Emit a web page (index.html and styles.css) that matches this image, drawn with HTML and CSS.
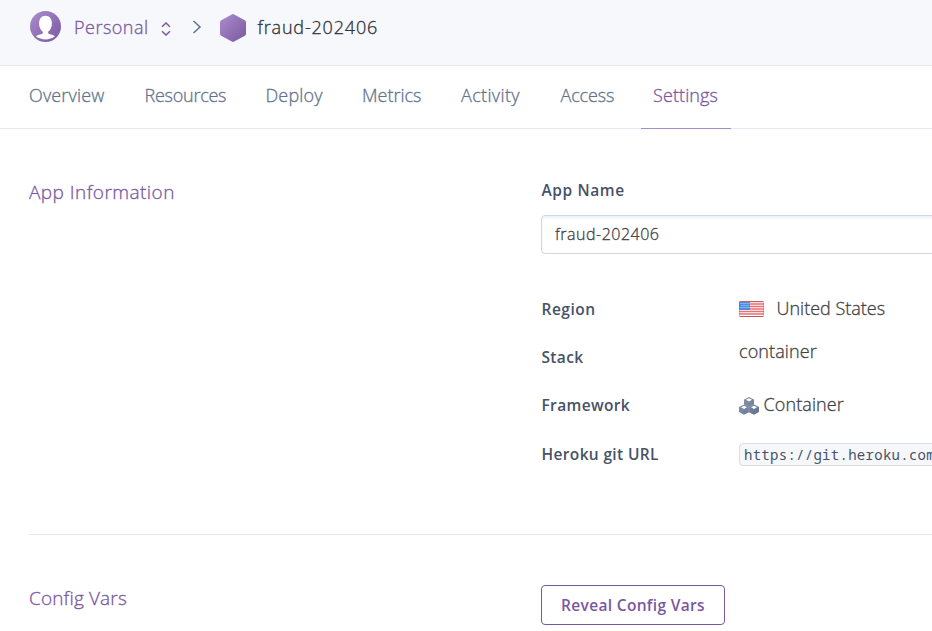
FILE: index.html
```html
<!DOCTYPE html>
<html lang="en">
<head>
<meta charset="utf-8">
<title>fraud-202406 · Settings | Heroku</title>
<link rel="stylesheet" href="styles.css">
</head>
<body>
<header class="breadcrumb">
  <svg class="avatar" viewBox="0 0 30 30">
    <defs><linearGradient id="purple" x1="0" y1="0" x2="1" y2="1"><stop offset="0" stop-color="#ac8dcd"/><stop offset="1" stop-color="#79589f"/></linearGradient></defs>
    <circle cx="15" cy="15" r="15" fill="url(#purple)"/>
    <path d="M15 4.500c-4 0-6.200 3-6.200 7.600 0 3.400 1.300 6.400 3.600 8.100v1.200c0 .8-.8 1-2.400 1.300-2 .4-3.400.9-4.200 1.800 2.500 2.100 5.800 3 9.200 3s6.700-.9 9.200-3c-.8-.9-2.200-1.400-4.200-1.800-1.600-.3-2.400-.5-2.400-1.300v-1.200c2.300-1.700 3.600-4.700 3.600-8.100 0-4.600-2.200-7.600-6.200-7.600z" fill="#fff"/>
  </svg>
  <span class="owner">Personal</span>
  <svg class="updown" viewBox="0 0 10 14"><path d="M1 4.700 5 1l4 3.700M1 9.300 5 13l4-3.700" /></svg>
  <svg class="chevron" viewBox="0 0 10 14"><path d="M1.500 1 8 7l-6.500 6"/></svg>
  <svg class="hexagon" viewBox="0 0 26 28"><path d="M11.800.4q1.200-.6 2.400 0l10.600 5.800q1.200.7 1.200 2v11.600q0 1.300-1.200 2l-10.600 5.800q-1.200.6-2.400 0L1.200 21.800q-1.200-.7-1.200-2V8.200q0-1.300 1.200-2z" fill="url(#purple)"/></svg>
  <span class="app">fraud-202406</span>
</header>
<nav class="tabs">
  <a class="tab overview">Overview</a><a class="tab resources">Resources</a><a class="tab deploy">Deploy</a><a class="tab metrics">Metrics</a><a class="tab activity">Activity</a><a class="tab access">Access</a><a class="tab settings active">Settings</a>
</nav>
<main>
  <section class="section info">
    <h2 class="title-info">App Information</h2>
    <div class="details">
      <label class="label label-name" for="name">App Name</label>
      <input class="name" id="name" value="fraud-202406">
      <dl class="facts">
        <dt class="label region">Region</dt>
        <dd class="united"><svg class="flag" viewBox="0 0 25 16"><rect width="25" height="16" rx="1.500" fill="#fff"/><path d="M1 .5h23M0 3h25M0 5.500h25M0 8h25M0 10.500h25M0 13h25" stroke="#ec6f72" stroke-width="1.300"/><path d="M.5 15.500h24" stroke="#c95458"/><path d="M.5.500h24" stroke="#c76069"/><path d="M0 1h11v8H0z" fill="#4a90e2"/><path d="M1.500 2.500h9M2.500 4.500h8M1.500 6.500h9" stroke="#b5d4f5" stroke-width="1" stroke-dasharray="1 1"/><path d="M.5 1v14M24.500 1v14" stroke="#a34d60" stroke-opacity=".3"/></svg><span>United States</span></dd>
        <dt class="label stack">Stack</dt>
        <dd class="stack-value">container</dd>
        <dt class="label framework">Framework</dt>
        <dd class="framework-value"><svg class="cubes" viewBox="0 0 20 18"><defs><linearGradient id="slate" x1="0" y1="0" x2="1" y2="1"><stop offset="0" stop-color="#8b98b0"/><stop offset="1" stop-color="#62718b"/></linearGradient></defs><path d="M10 0 15 2.500v5L20 10v5l-5 2.800-5-2.500-5 2.500L0 15v-5l5-2.500v-5z" fill="url(#slate)"/><path d="m10 1.200 3 1.600-3 1.600-3-1.600zM5 8.700l3 1.600-3 1.600-3-1.600zM15 8.700l3 1.600-3 1.600-3-1.600z" fill="#fff"/><path d="M10 10v5M5 7.500 10 10l5-2.500" fill="none" stroke="#fff" stroke-opacity=".35" stroke-width=".5"/></svg><span>Container</span></dd>
        <dt class="label git">Heroku git URL</dt>
        <dd><code>https://git.heroku.com</code></dd>
      </dl>
    </div>
  </section>
  <section class="section config">
    <h2 class="title-config">Config Vars</h2>
    <div class="details"><button type="button">Reveal Config Vars</button></div>
  </section>
</main>
</body>
</html>
```
FILE: styles.css
```css
* { box-sizing: border-box; }
body { margin: 0; height: 631px; overflow: hidden; background: #fff; font: 300 18px/24px "Open Sans", "Noto Sans", sans-serif; color: #3f3f44; -webkit-text-stroke: .3px; }
svg { display: block; flex: none; }
.breadcrumb { display: flex; align-items: center; height: 66px; padding: 0 0 11px 30px; background: #f7f8fc; border-bottom: 1px solid #e3e9ef; }
.avatar { width: 31px; height: 31px; margin-top: -1px; }
.owner { width: 74px; margin-left: 13px; color: #79589f; white-space: nowrap; letter-spacing: .5px; }
.updown { width: 10px; height: 14px; margin: 3px 0 0 13px; fill: none; stroke: #79589f; stroke-width: 1.5; }
.chevron { width: 10px; height: 14px; margin-left: 21px; fill: none; stroke: #62738d; stroke-width: 1.5; }
.hexagon { width: 26px; height: 28px; margin: 1px 0 0 18px; }
.app { margin-left: 11.5px; color: #2d3138; white-space: nowrap; letter-spacing: .82px; }
.tabs { display: grid; grid-template-columns: 115.5px 121px 96.5px 99px 99.5px 80.5px 90px; height: 63px; padding-left: 29px; border-bottom: 1px solid #e6e8f8; color: #62738d; }
.tab { height: 63px; padding-top: 17px; white-space: nowrap; }
.overview, .deploy { letter-spacing: .15px; }
.resources { letter-spacing: -.25px; }
.activity { letter-spacing: .35px; }
.access { letter-spacing: -.15px; }
.active { padding-left: 12px; letter-spacing: .1px; color: #79589f; border-bottom: 1px solid #a68dc5; }
main { padding-left: 29px; }
.section { display: grid; grid-template-columns: 512px 1fr; overflow: hidden; }
h2 { margin: -1px 0 0; font: inherit; font-size: 19px; line-height: 28px; color: #79589f; white-space: nowrap; }
.title-info { letter-spacing: .45px; }
.title-config { letter-spacing: .15px; }
.info { height: 406px; padding-top: 50px; border-bottom: 1px solid #e3e9ef; }
.label, button, code { -webkit-text-stroke: 0; }
.label { padding-left: .5px; font-weight: 600; font-size: 15.5px; letter-spacing: .35px; color: #475266; white-space: nowrap; }
.label-name { display: block; width: max-content; margin-top: -1px; letter-spacing: .6px; }
.name { display: block; width: 460px; height: 39px; margin-top: 13px; padding: 0 13px 2px; border: 1px solid #cfd7e6; border-radius: 4px; background: #fff; box-shadow: inset 0 2px 3px #edf0f8; font: 300 16px/24px "Open Sans", "Noto Sans", sans-serif; letter-spacing: .5px; color: #3f3f44; -webkit-text-stroke: .3px; }
.facts { display: grid; grid-template-columns: 198px 1fr; grid-template-rows: 48px 48px 48px 48px; margin: 43px 0 0; }
dd { margin: 0; white-space: nowrap; }
.united, .framework-value { display: flex; align-items: center; height: 24px; }
.united { margin-top: -1px; }
.flag { width: 25px; height: 16px; margin: 1px 12.5px 0 0; }
.stack-value { margin-top: -6px; letter-spacing: .1px; }
.framework-value { margin-top: -1px; letter-spacing: .1px; }
.cubes { width: 20px; height: 18px; margin: 3px 4.5px 0 0; }
.region { letter-spacing: .5px; }
.git { padding-top: 1px; }
code { display: block; width: 390px; height: 23px; margin-top: 2px; padding: 0 4px; border: 1px solid #d8dde2; border-radius: 4px; background: #f5f7fb; font: 400 14px/22px "Noto Sans Mono", "DejaVu Sans Mono", monospace; letter-spacing: .28px; color: #475266; }
.config { height: 96px; padding-top: 50px; }
button { width: 184px; height: 40px; padding: 0; border: 1px solid #79589f; border-radius: 4px; background: #fff; font: 600 15.5px/24px "Open Sans", "Noto Sans", sans-serif; letter-spacing: .33px; color: #79589f; white-space: nowrap; }
```
